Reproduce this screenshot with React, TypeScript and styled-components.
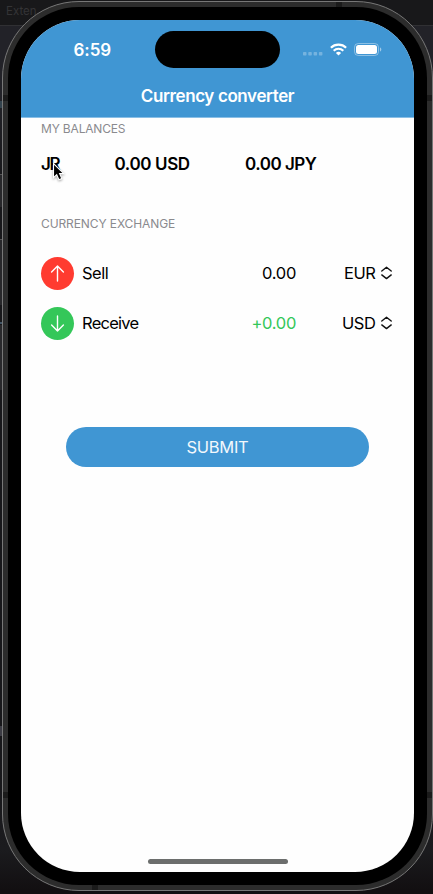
import React from 'react';
import styled, { createGlobalStyle } from 'styled-components';

const blue = '#4096d3';

const GlobalStyle = createGlobalStyle`
  * { box-sizing: border-box; }
  body {
    margin: 0;
    background: #141416;
    font-family: Inter, "Liberation Sans", sans-serif;
    overflow: hidden;
  }
`;

const Desktop = styled.div`
  position: relative;
  width: 433px;
  height: 894px;
  padding: 1px 0 0 2px;
  overflow: hidden;
  background:
    linear-gradient(#303033, #303033) 0 25px / 433px 1px no-repeat,
    linear-gradient(#18181a 0 25px, #222228 26px 95px, #17171a 180px 760px, #1b1b1e 850px, #120f11 890px);
`;

const WindowTitle = styled.span`
  position: absolute;
  left: 6px;
  top: 4px;
  font-size: 11.5px;
  line-height: 14px;
  color: #343436;
`;

const EdgeMark = styled.i<{ $top: number; $height: number; $color: string }>`
  position: absolute;
  left: 0;
  top: ${(p) => p.$top}px;
  width: 2px;
  height: ${(p) => p.$height}px;
  background: ${(p) => p.$color};
`;

const Phone = styled.div`
  position: relative;
  width: 431px;
  height: 890px;
  padding: 5px;
  border: 1px solid #777;
  border-radius: 77px;
  background: #2c2c2c;
`;

const Antenna = styled.i<{ $x: number; $y: number; $vertical?: boolean }>`
  position: absolute;
  left: ${(p) => p.$x}px;
  top: ${(p) => p.$y}px;
  width: ${(p) => (p.$vertical ? 6 : 5)}px;
  height: ${(p) => (p.$vertical ? 5 : 6)}px;
  background: #1b1b1b;
`;

const Bezel = styled.div`
  width: 419px;
  height: 878px;
  padding: 13px;
  border-radius: 71px;
  background: #000;
`;

const Screen = styled.div`
  display: flex;
  flex-direction: column;
  width: 393px;
  height: 852px;
  border-radius: 59px;
  overflow: hidden;
  background: #fefefe;
`;

const Header = styled.header`
  flex: none;
  height: 98px;
  background: ${blue};
  border-bottom: 1px solid #8abfe6;
  color: #fff;
`;

const StatusBar = styled.div`
  display: grid;
  grid-template-columns: 134px 125px 134px;
  height: 59px;
  align-items: center;
`;

const Clock = styled.div`
  padding: 1px 0 0 52.5px;
  font-size: 17px;
  font-weight: 600;
  line-height: 20px;
  letter-spacing: -0.05px;
`;

const Island = styled.div`
  height: 37px;
  border-radius: 19px;
  background: #000;
`;

const StatusIcons = styled.div`
  display: flex;
  align-items: center;
  padding-left: 23px;

  svg { flex: none; }
`;

const Title = styled.h1`
  margin: 6px 0 0;
  text-align: center;
  font-size: 17px;
  line-height: 22px;
  font-weight: 600;
  letter-spacing: -0.38px;
`;

const Content = styled.main`
  flex: 1;
  display: flex;
  flex-direction: column;
  padding: 3px 20px 0;
`;

const SectionTitle = styled.h2<{ $spacing: number }>`
  margin: 0;
  font-size: 12px;
  line-height: 16px;
  font-weight: 400;
  letter-spacing: ${(p) => p.$spacing}px;
  color: #8a8a8e;
`;

const Balances = styled.div`
  position: relative;
  display: grid;
  grid-template-columns: 73.5px 130.5px 1fr;
  height: 79px;
  padding-top: 16px;
  font-size: 17px;
  line-height: 22px;
  font-weight: 600;
  color: #000;
`;

const Balance = styled.span<{ $spacing?: number }>`
  letter-spacing: ${(p) => p.$spacing ?? -0.5}px;
  white-space: nowrap;
`;

const Pointer = styled.svg`
  position: absolute;
  left: 11px;
  top: 25px;
  filter: drop-shadow(0 1px 1px rgba(0, 0, 0, 0.35));
`;

const Exchange = styled.div`
  display: flex;
  flex-direction: column;
  padding-top: 16px;
`;

const Row = styled.div`
  display: grid;
  grid-template-columns: 41px 1fr 100px 79px 17px;
  height: 50px;
  align-items: center;
  font-size: 16.5px;
  line-height: 22px;
  color: #000;
`;

const Badge = styled.span<{ $color: string }>`
  display: flex;
  align-items: center;
  justify-content: center;
  width: 33px;
  height: 33px;
  border-radius: 50%;
  background: ${(p) => p.$color};
`;

const Label = styled.span<{ $spacing: number }>`
  letter-spacing: ${(p) => p.$spacing}px;
`;

const Amount = styled.span<{ $positive?: boolean }>`
  padding-right: 2px;
  text-align: right;
  letter-spacing: -0.3px;
  color: ${(p) => (p.$positive ? '#34c759' : '#000')};
`;

const Currency = styled.span`
  padding-right: 1.5px;
  text-align: right;
  letter-spacing: -0.4px;
`;

const Chevrons = styled.svg`
  margin-left: 4px;
`;

const Submit = styled.button`
  align-self: center;
  width: 302.5px;
  height: 40px;
  margin-top: 79px;
  padding: 0;
  border: 0;
  border-radius: 20px;
  background: ${blue};
  color: #f2f8fc;
  font-family: inherit;
  font-size: 16.5px;
  line-height: 40px;
  letter-spacing: -0.3px;
`;

const HomeIndicator = styled.div`
  align-self: center;
  width: 140px;
  height: 5px;
  margin: auto 0 8px;
  border-radius: 3px;
  background: #6c6e6d;
`;

const Arrow = ({ down }: { down?: boolean }) => (
  <svg width="17" height="17" viewBox="0 0 17 17" fill="none" stroke="#fff" strokeWidth="1.4" strokeLinecap="round" strokeLinejoin="round">
    <path d={down ? 'M8.5 1v15M2.6 10.1l5.9 5.9 5.9-5.9' : 'M8.5 16V1M2.6 6.9L8.5 1l5.9 5.9'} />
  </svg>
);

const Signal = () => (
  <svg width="20" height="14" viewBox="0 0 20 14">
    <g fill="#fff" opacity="0.28">
      <rect x="0" y="9" width="3.5" height="3.5" rx="0.8" />
      <rect x="5.3" y="9" width="3.5" height="3.5" rx="0.8" />
      <rect x="10.6" y="9" width="3.5" height="3.5" rx="0.8" />
      <rect x="15.9" y="9" width="3.5" height="3.5" rx="0.8" />
    </g>
  </svg>
);

const Wifi = () => (
  <svg width="17" height="13" viewBox="0 0 17 13" fill="none" stroke="#fff" strokeWidth="2.2">
    <path d="M.9 4.7C5 .55 12 .55 16.1 4.7" />
    <path d="M3.7 7.7C6.4 5.1 10.6 5.1 13.3 7.7" />
    <path d="M8.5 12.5L5.9 9.9C7.4 8.5 9.6 8.5 11.1 9.9z" fill="#fff" stroke="none" />
  </svg>
);

const Battery = () => (
  <svg width="28" height="14" viewBox="0 0 28 14">
    <rect x="0.5" y="0.5" width="24" height="12" rx="3.8" fill="none" stroke="#fff" strokeOpacity="0.4" />
    <rect x="2" y="2" width="21" height="9" rx="2.5" fill="#fff" />
    <path d="M26 4.5v4c.8-.35 1.3-1.1 1.3-2S26.8 4.85 26 4.5z" fill="#fff" fillOpacity="0.5" />
  </svg>
);

const SignalSlot = styled.span`
  display: flex;
  width: 27px;
`;

const WifiSlot = styled.span`
  display: flex;
  width: 24px;
`;

const rows = [
  { label: 'Sell', spacing: -0.5, color: '#ff3b30', amount: '0.00', currency: 'EUR' },
  { label: 'Receive', spacing: -0.75, color: '#34c759', amount: '+0.00', currency: 'USD', down: true },
];

export default function App() {
  return (
    <>
      <GlobalStyle />
      <Desktop>
        <WindowTitle>Exten</WindowTitle>
        <EdgeMark $top={101} $height={7} $color="#33434e" />
        <EdgeMark $top={174} $height={1} $color="#555" />
        <EdgeMark $top={175} $height={32} $color="#27272a" />
        <EdgeMark $top={239} $height={1} $color="#555" />
        <EdgeMark $top={240} $height={65} $color="#27272a" />
        <EdgeMark $top={322} $height={2} $color="#415565" />
        <EdgeMark $top={325} $height={65} $color="#29292c" />
        <EdgeMark $top={726} $height={10} $color="#3c3c44" />
        <Phone>
          <Antenna $x={0} $y={93} />
          <Antenna $x={424} $y={93} />
          <Antenna $x={0} $y={790} />
          <Antenna $x={424} $y={790} />
          <Antenna $x={333} $y={0} $vertical />
          <Antenna $x={89} $y={883} $vertical />
          <Bezel>
            <Screen>
              <Header>
                <StatusBar>
                  <Clock>6:59</Clock>
                  <Island />
                  <StatusIcons>
                    <SignalSlot><Signal /></SignalSlot>
                    <WifiSlot><Wifi /></WifiSlot>
                    <Battery />
                  </StatusIcons>
                </StatusBar>
                <Title>Currency converter</Title>
              </Header>
              <Content>
                <SectionTitle $spacing={-0.17}>MY BALANCES</SectionTitle>
                <Balances>
                  <Balance $spacing={-1.3}>JR</Balance>
                  <Balance $spacing={-0.38}>0.00 USD</Balance>
                  <Balance>0.00 JPY</Balance>
                  <Pointer width="14" height="20" viewBox="0 0 14 20">
                    <path d="M1.5 1.5v14.2l3.2-3 2.2 5.1 2.9-1.2-2.2-5h4.2z" fill="#000" stroke="#fff" strokeWidth="1.1" />
                  </Pointer>
                </Balances>
                <SectionTitle $spacing={-0.1}>CURRENCY EXCHANGE</SectionTitle>
                <Exchange>
                  {rows.map((r) => (
                    <Row key={r.label}>
                      <Badge $color={r.color}><Arrow down={r.down} /></Badge>
                      <Label $spacing={r.spacing}>{r.label}</Label>
                      <Amount $positive={r.down}>{r.amount}</Amount>
                      <Currency>{r.currency}</Currency>
                      <Chevrons width="11" height="14" viewBox="0 0 11 14" fill="none" stroke="#111" strokeWidth="1.4" strokeLinecap="round" strokeLinejoin="round">
                        <path d="M.8 5L5.5 1.3l4.7 3.7M.8 8.9l4.7 3.7 4.7-3.7" />
                      </Chevrons>
                    </Row>
                  ))}
                </Exchange>
                <Submit>SUBMIT</Submit>
                <HomeIndicator />
              </Content>
            </Screen>
          </Bezel>
        </Phone>
      </Desktop>
    </>
  );
}
